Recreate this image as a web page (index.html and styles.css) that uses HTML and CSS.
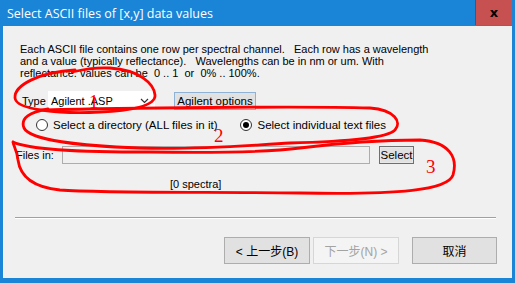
FILE: index.html
```html
<!DOCTYPE html>
<html>
<head>
    <title>Select ASCII files of [x,y] data values</title>
    <link rel="stylesheet" href="styles.css">
</head>
<body>
    <div class="window">
        <div class="titlebar">
            <span class="title">Select ASCII files of [x,y] data values</span>
            <div class="close">x</div>
        </div>

        <div class="client">
            <p class="intro">Each ASCII file contains one row per spectral channel.   Each row has a wavelength
and a value (typically reflectance).   Wavelengths can be in nm or um. With
reflectance. values can be  0 .. 1  or  0% .. 100%.</p>

            <div class="type-row">
                <span class="label">Type</span>
                <div class="combo">
                    <span>Agilent .ASP</span>
                    <svg class="chevron" width="9" height="6" viewBox="0 0 9 6"><polyline points="1,1 4.5,4.5 8,1" fill="none" stroke="#333" stroke-width="1.2"/></svg>
                </div>
                <button class="btn btn-options">Agilent options</button>
            </div>

            <div class="radio-row">
                <label class="radio"><span class="dot"></span>Select a directory (ALL files in it)</label>
                <label class="radio radio-second"><span class="dot checked"></span>Select individual text files</label>
            </div>

            <div class="files-row">
                <span class="label">Files in:</span>
                <div class="field"></div>
                <button class="btn btn-select">Select</button>
            </div>

            <div class="count">[0 spectra]</div>

            <div class="sep"></div>

            <div class="nav">
                <button class="btn nav-btn">&lt; 上一步(B)</button>
                <button class="btn nav-btn disabled">下一步(N) &gt;</button>
                <button class="btn nav-btn cancel">取消</button>
            </div>
        </div>

        <!-- red hand-drawn marks over the dialog -->
        <svg class="marks" width="515" height="283" viewBox="0 0 515 283">
            <g fill="none" stroke="#f00" stroke-width="2.8" stroke-linecap="round">
                <path d="M 75 70 C 40 72, 14 85, 15 98 C 16 110, 60 114, 100 112 C 130 111, 156 106, 155 95 C 154 84, 140 70, 110 68 C 95 67, 85 69, 72 72"/>
                <path d="M 45 110 C 120 108, 300 106, 370 108 C 395 110, 402 122, 395 130 C 385 140, 330 142, 290 143 C 250 145, 200 150, 140 148 C 80 146, 30 140, 24 128 C 20 118, 30 112, 48 109"/>
                <path d="M 13 142 C 30 150, 80 152, 150 152 C 220 153, 270 152, 300 148 C 340 143, 380 140, 420 140 C 450 142, 458 158, 453 175 C 448 190, 400 195, 300 193 C 200 192, 100 193, 60 190 C 30 187, 20 175, 18 160 C 17 150, 13 145, 13 142"/>
            </g>
            <g class="marks-num" fill="#f00">
                <text x="89" y="108">1</text>
                <text x="214" y="142">2</text>
                <text x="426" y="173">3</text>
            </g>
        </svg>
    </div>
</body>
</html>
```

FILE: styles.css
```css
body {
    margin: 0;
    background-color: #ffffff;
}

.window {
    position: relative;
    width: 509px;
    height: 278px;
    border: 3px solid #1a84d6;
    border-top: none;
    border-bottom-width: 5px;
    background-color: #1a84d6;
    font-family: "Liberation Sans", Arial, "Noto Sans CJK SC", sans-serif;
    font-size: 11px;
    color: #000;
}

.titlebar {
    display: flex;
    align-items: center;
    height: 26px;
    background-color: #1a84d6;
}

.title {
    flex: 1;
    padding-left: 4px;
    font-family: "Open Sans", "Noto Sans", sans-serif;
    font-size: 12.5px;
    color: #fff;
}

.close {
    width: 36px;
    height: 25px;
    align-self: flex-start;
    display: flex;
    align-items: center;
    justify-content: center;
    background-color: #c75050;
    border-left: 1px solid #8c3a3a;
    font-family: "DejaVu Sans", sans-serif;
    font-weight: bold;
    font-size: 13px;
    color: #000;
}

.client {
    height: 252px;
    background-color: #f0f0f0;
    box-shadow: inset 1px 0 0 #fafafa;
    overflow: hidden;
}

.intro {
    margin: 17px 0 0 17px;
    white-space: pre;
    line-height: 12px;
}

.type-row {
    display: flex;
    align-items: center;
    height: 19px;
    margin-top: 12px;
    padding-left: 19px;
}

.type-row .label {
    width: 26px;
}

.combo {
    display: flex;
    align-items: center;
    justify-content: space-between;
    width: 107px;
    height: 19px;
    padding: 0 6px 0 3px;
    background-color: #fff;
    box-sizing: border-box;
}

.btn {
    font-family: "Liberation Sans", Arial, "Noto Sans CJK SC", sans-serif;
    font-size: 11px;
    color: #000;
    background-color: #e1e1e1;
    border: 1px solid #adadad;
    padding: 0;
    margin: 0;
    box-sizing: border-box;
}

.btn-options {
    width: 82px;
    height: 18px;
    margin-left: 19px;
    border-color: #8fb1d3;
    font-size: 11.5px;
}

.radio-row {
    display: flex;
    align-items: center;
    height: 14px;
    margin-top: 8px;
    padding-left: 33px;
}

.radio {
    display: flex;
    align-items: center;
    font-size: 11.5px;
}

.radio-second {
    margin-left: 23px;
}

.dot {
    position: relative;
    width: 10px;
    height: 10px;
    margin-right: 5px;
    border: 1px solid #333;
    border-radius: 50%;
    background-color: #fff;
}

.dot.checked::after {
    content: "";
    position: absolute;
    left: 2px;
    top: 2px;
    width: 6px;
    height: 6px;
    border-radius: 50%;
    background-color: #000;
}

.files-row {
    display: flex;
    align-items: center;
    height: 18px;
    margin-top: 14px;
    padding-left: 13px;
}

.files-row .label {
    width: 46px;
}

.field {
    width: 308px;
    height: 18px;
    border: 1px solid #adadad;
    box-sizing: border-box;
}

.btn-select {
    width: 35px;
    height: 18px;
    margin-left: 9px;
    border: 1px solid #6f6f6f;
    box-shadow: inset 0 0 0 1px #e8e8e8;
    font-size: 11.5px;
}

.count {
    margin-top: 14px;
    padding-left: 167px;
    line-height: 12px;
}

.sep {
    width: 481px;
    height: 1px;
    margin: 27px 0 0 12px;
    background-color: #a0a0a0;
    border-bottom: 1px solid #fff;
}

.nav {
    display: flex;
    margin-top: 18px;
    padding-left: 221px;
}

.nav-btn {
    width: 86px;
    height: 27px;
    margin-right: 3px;
    font-size: 12px;
}

.nav-btn.disabled {
    background-color: #f4f4f4;
    border-color: #d6d6d6;
    color: #a3a3a3;
}

.nav-btn.cancel {
    width: 85px;
    margin-left: 10px;
}

.marks {
    position: absolute;
    left: -3px;
    top: 0;
    pointer-events: none;
}

.marks-num {
    font-family: "Liberation Serif", "Times New Roman", serif;
    font-size: 19px;
}
```
